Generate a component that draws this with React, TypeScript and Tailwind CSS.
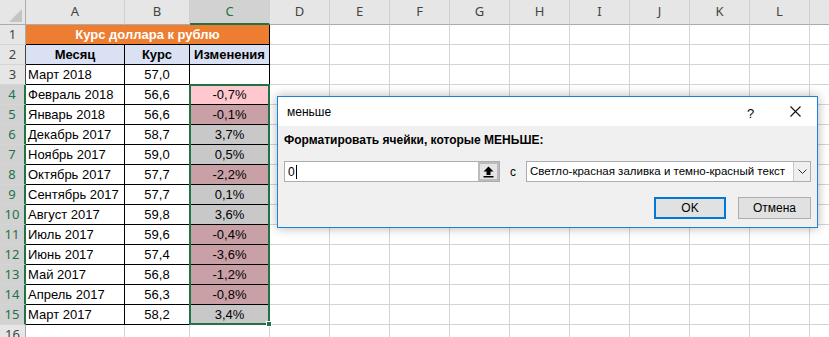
import React from "react";

const CELL = "font-['Liberation_Sans',Arial,sans-serif] text-[13px] text-black";
const HDR = "font-['Noto_Sans',sans-serif] text-[13px]";
const UI = "font-['Liberation_Sans',Arial,sans-serif] text-[12px] text-black";

type Row = [string, string, string | null];
const rows: Row[] = [
  ["Март 2018", "57,0", null],
  ["Февраль 2018", "56,6", "-0,7%"],
  ["Январь 2018", "56,6", "-0,1%"],
  ["Декабрь 2017", "58,7", "3,7%"],
  ["Ноябрь 2017", "59,0", "0,5%"],
  ["Октябрь 2017", "57,7", "-2,2%"],
  ["Сентябрь 2017", "57,7", "0,1%"],
  ["Август 2017", "59,8", "3,6%"],
  ["Июль 2017", "59,6", "-0,4%"],
  ["Июнь 2017", "57,4", "-3,6%"],
  ["Май 2017", "56,8", "-1,2%"],
  ["Апрель 2017", "56,3", "-0,8%"],
  ["Март 2017", "58,2", "3,4%"],
];

const emptyCols = ["D", "E", "F", "G", "H", "I", "J", "K", "L", ""];

function RowHeader({ n, selected, edge }: { n: number; selected?: boolean; edge?: boolean }) {
  return (
    <div
      className={`${HDR} w-[26px] shrink-0 h-[20px] flex items-center justify-center border-b border-b-[#d5d5d5] overflow-hidden ${
        selected
          ? "bg-[#d2d2d2] text-[#217346] border-r-2 border-r-[#217346]"
          : edge
          ? "bg-[#e6e6e6] text-[#444] border-r border-r-[#444]"
          : "bg-[#e6e6e6] text-[#444] border-r border-r-[#ababab]"
      }`}
    >
      {n}
    </div>
  );
}

function EmptyCells() {
  return (
    <>
      {emptyCols.map((c, i) => (
        <div key={i} className="w-[60px] shrink-0 h-[20px] border-r border-b border-[#d4d4d4] bg-white" />
      ))}
    </>
  );
}

function Sheet() {
  return (
    <div className="relative w-[829px] h-[337px] overflow-hidden bg-white">
      {/* column headers */}
      <div className="flex h-[25px]">
        <div className="w-[26px] shrink-0 h-[25px] bg-[#e6e6e6] border-r border-b border-[#ababab] relative">
          <svg className="absolute left-[9px] top-[9px]" width="13" height="13" viewBox="0 0 13 13">
            <polygon points="13,0 13,13 0,13" fill="#c4c4c4" />
          </svg>
        </div>
        <div className={`${HDR} w-[99px] shrink-0 h-[25px] bg-[#e6e6e6] text-[#444] border-r border-r-[#d0d0d0] border-b border-b-[#ababab] flex items-center justify-center`}>
          A
        </div>
        <div className={`${HDR} w-[65px] shrink-0 h-[25px] bg-[#e6e6e6] text-[#444] border-r border-r-[#d0d0d0] border-b border-b-[#ababab] flex items-center justify-center`}>
          B
        </div>
        <div className={`${HDR} w-[80px] shrink-0 h-[25px] bg-[#d2d2d2] text-[#217346] border-r border-r-[#d0d0d0] border-b-2 border-b-[#217346] flex items-center justify-center`}>
          C
        </div>
        {emptyCols.map((c, i) => (
          <div
            key={i}
            className={`${HDR} w-[60px] shrink-0 h-[25px] bg-[#e6e6e6] text-[#444] border-r border-r-[#d0d0d0] border-b border-b-[#ababab] flex items-center justify-center`}
          >
            {c}
          </div>
        ))}
      </div>

      {/* row 1 */}
      <div className="flex h-[20px]">
        <RowHeader n={1} />
        <div className={`${CELL} w-[244px] shrink-0 h-[20px] bg-[#ed7d31] border-r border-b border-black flex items-center justify-center font-bold text-white`}>
          Курс доллара к рублю
        </div>
        <EmptyCells />
      </div>

      {/* row 2 */}
      <div className="flex h-[20px]">
        <RowHeader n={2} edge />
        <div className={`${CELL} w-[99px] shrink-0 h-[20px] bg-[#d9e1f2] border-r border-b border-black flex items-center justify-center font-bold`}>
          Месяц
        </div>
        <div className={`${CELL} w-[65px] shrink-0 h-[20px] bg-[#d9e1f2] border-r border-b border-black flex items-center justify-center font-bold`}>
          Курс
        </div>
        <div className={`${CELL} w-[80px] shrink-0 h-[20px] bg-[#d9e1f2] border-r border-b border-black flex items-center justify-center font-bold`}>
          Изменения
        </div>
        <EmptyCells />
      </div>

      {rows.map(([m, k, ch], i) => {
        const n = i + 3;
        const selected = n >= 4;
        const neg = ch !== null && ch.startsWith("-");
        let cCls = "bg-white text-black";
        if (n === 4) cCls = "bg-[#ffc7ce] text-[#9c0006]";
        else if (selected && neg) cCls = "bg-[#c9a0a5] text-[#7d1a1a]";
        else if (selected) cCls = "bg-[#c8c8c8] text-[#1a1a1a]";
        return (
          <div key={n} className="flex h-[20px]">
            <RowHeader n={n} selected={selected} edge={!selected} />
            <div className={`${CELL} w-[99px] shrink-0 h-[20px] bg-white border-r border-b border-black flex items-center pl-[2px] whitespace-nowrap`}>
              {m}
            </div>
            <div className={`${CELL} w-[65px] shrink-0 h-[20px] bg-white border-r border-b border-black flex items-center justify-center`}>
              {k}
            </div>
            <div className={`${CELL} w-[80px] shrink-0 h-[20px] border-r border-b border-black flex items-center justify-center ${cCls}`}>
              {ch ?? ""}
            </div>
            <EmptyCells />
          </div>
        );
      })}

      {/* row 16 */}
      <div className="flex h-[20px]">
        <RowHeader n={16} />
        <div className="w-[99px] shrink-0 h-[20px] border-r border-b border-[#d4d4d4]" />
        <div className="w-[65px] shrink-0 h-[20px] border-r border-b border-[#d4d4d4]" />
        <div className="w-[80px] shrink-0 h-[20px] border-r border-b border-[#d4d4d4]" />
        <EmptyCells />
      </div>

      {/* selection border C4:C15 */}
      <div className="absolute left-[189px] top-[84px] w-[81px] h-[241px] border-2 border-[#217346] pointer-events-none" />
      <div className="absolute left-[266px] top-[321px] w-[6px] h-[6px] bg-[#217346] border border-white" />

      <Dialog />
    </div>
  );
}

function Dialog() {
  return (
    <div className={`${UI} absolute left-[277px] top-[96px] w-[541px] h-[132px] border border-[#1883d7] bg-[#f0f0f0] shadow-[0_0_10px_rgba(0,0,0,0.3)] flex flex-col`}>
      <div className="h-[29px] bg-white flex items-center relative shrink-0">
        <span className="pl-[9px]">меньше</span>
        <span className="absolute left-[469px] top-[7px] text-[13px]">?</span>
        <svg className="absolute left-[512px] top-[9px]" width="11" height="11" viewBox="0 0 11 11">
          <path d="M0.5 0.5 L10.5 10.5 M10.5 0.5 L0.5 10.5" stroke="#111" strokeWidth="1.1" />
        </svg>
      </div>
      <div className="flex flex-col px-[6px]">
        <div className="pt-[6px] h-[22px] font-bold leading-[16px]">Форматировать ячейки, которые МЕНЬШЕ:</div>
        <div className="flex items-center mt-[13px] h-[21px]">
          <div className="w-[216px] h-[21px] flex border border-[#abadb3] bg-white">
            <div className="flex-1 flex items-center pl-[3px]">
              <span>0</span>
              <span className="w-px h-[14px] bg-black ml-px" />
            </div>
            <div className="w-[21px] h-[19px] border-2 border-[#bcbcbc] bg-[#e5e5e5] flex items-center justify-center">
              <svg width="11" height="12" viewBox="0 0 11 12">
                <path d="M5.5 0.5 L10.5 5.5 L7.5 5.5 L7.5 9 L3.5 9 L3.5 5.5 L0.5 5.5 Z" fill="#000" />
                <rect x="0.5" y="10" width="10" height="1.5" fill="#000" />
              </svg>
            </div>
          </div>
          <span className="w-[26px] text-center">с</span>
          <div className="w-[285px] h-[21px] flex items-center border border-[#abadb3] bg-white">
            <span className="flex-1 pl-[3px] whitespace-nowrap overflow-hidden text-[11.5px]">Светло-красная заливка и темно-красный текст</span>
            <div className="w-[17px] h-[19px] border-l border-[#c8c8c8] bg-[#efefef] flex items-center justify-center">
              <svg width="9" height="6" viewBox="0 0 9 6">
                <path d="M0.5 0.5 L4.5 4.5 L8.5 0.5" stroke="#333" fill="none" strokeWidth="1" />
              </svg>
            </div>
          </div>
        </div>
        <div className="flex justify-end gap-[12px] mt-[15px]">
          <div className="w-[72px] h-[22px] border-2 border-[#0078d7] bg-[#e1e1e1] flex items-center justify-center">OK</div>
          <div className="w-[73px] h-[22px] border border-[#adadad] bg-[#e1e1e1] flex items-center justify-center">Отмена</div>
        </div>
      </div>
    </div>
  );
}

export default function App() {
  return <Sheet />;
}
